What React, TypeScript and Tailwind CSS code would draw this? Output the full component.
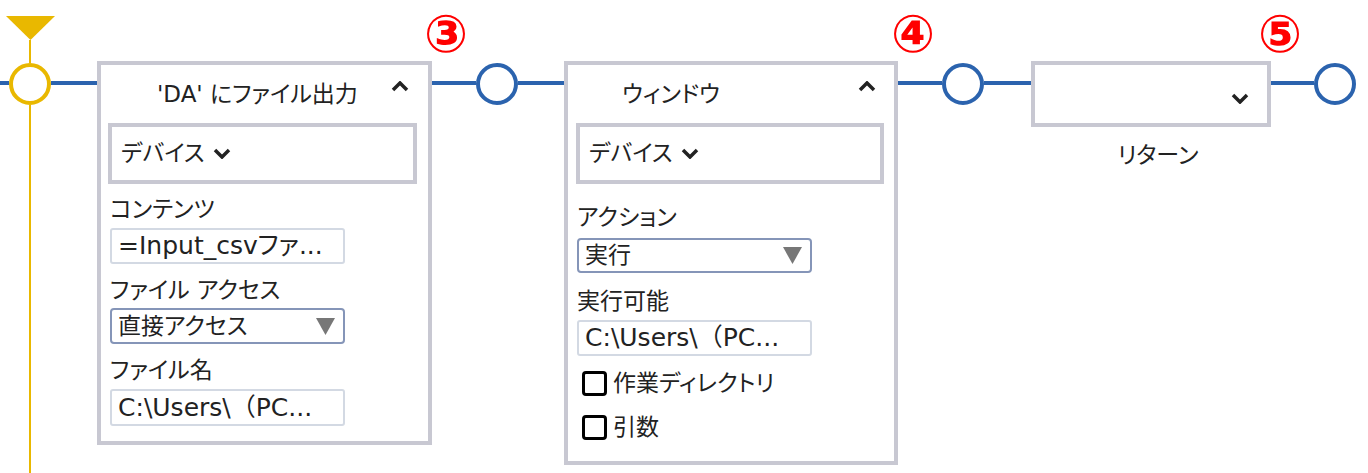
const BLUE = 'bg-[#2b63ae]'

function Seg({ w }: { w: string }) {
  return <div className={`${w} h-[4px] mt-[65px] shrink-0 ${BLUE}`} />
}

function Node() {
  return <div className="w-[42px] h-[42px] mt-[47px] shrink-0 rounded-full border-4 border-[#2b63ae] bg-white" />
}

function ChevronDown() {
  return (
    <svg width="18" height="11" viewBox="0 0 18 11" className="shrink-0">
      <polyline points="2,2 9,9 16,2" fill="none" stroke="#222" strokeWidth="3.5" />
    </svg>
  )
}

function ChevronUp() {
  return (
    <svg width="18" height="11" viewBox="0 0 18 11" className="shrink-0">
      <polyline points="2,9 9,2 16,9" fill="none" stroke="#222" strokeWidth="3.5" />
    </svg>
  )
}

function Header({ title, pl, pr }: { title: string; pl: string; pr: string }) {
  return (
    <div className={`flex h-[58px] ${pl} ${pr}`}>
      <div className="flex-1 pt-[14px] text-[23px] leading-[30px] whitespace-nowrap">{title}</div>
      <div className="mt-[16px]">
        <ChevronUp />
      </div>
    </div>
  )
}

function DeviceBox({ ml, w }: { ml: string; w: string }) {
  return (
    <div className={`${ml} ${w} h-[61px] border-4 border-[#c8c8d2] flex items-center gap-[8px] pl-[9px] text-[23px]`}>
      <span>デバイス</span>
      <ChevronDown />
    </div>
  )
}

function Path() {
  return (
    <>
      C:\Users\<span className="[font-feature-settings:normal]">（</span>PC...
    </>
  )
}

function TextField({ children, mt, h }: { children: React.ReactNode; mt: string; h: string }) {
  return (
    <div className={`${mt} ${h} w-[235px] border-2 border-[#d3d9e3] rounded-[3px] px-[6px] flex items-center text-[25px] whitespace-nowrap overflow-hidden`}>
      {children}
    </div>
  )
}

function SelectField({ value, mt, h }: { value: string; mt: string; h: string }) {
  return (
    <div className={`${mt} ${h} w-[235px] border-2 border-[#8595b8] rounded-[4px] pl-[6px] pr-[8px] flex items-center justify-between text-[23px]`}>
      <span>{value}</span>
      <svg width="19" height="17" viewBox="0 0 19 17">
        <polygon points="0,0 19,0 9.5,17" fill="#777" />
      </svg>
    </div>
  )
}

function Label({ text, mt }: { text: string; mt: string }) {
  return <div className={`${mt} h-[28px] text-[23px] leading-[28px] whitespace-nowrap`}>{text}</div>
}

function Check({ text, mt }: { text: string; mt: string }) {
  return (
    <div className={`${mt} h-[36px] flex items-center gap-[6px] pl-[5px] text-[23px]`}>
      <div className="w-[25px] h-[25px] border-[3px] border-black rounded-[4px]" />
      <span>{text}</span>
    </div>
  )
}

function Step({ n, left }: { n: string; left: string }) {
  return (
    <div className={`absolute ${left} top-[4px] w-[60px] h-[60px] flex items-center justify-center text-[52px] leading-none font-bold text-[#ff0000]`}>
      {n}
    </div>
  )
}

export default function App() {
  return (
    <div className="relative w-[1368px] h-[473px] overflow-hidden bg-white text-[#222] font-['DejaVu_Sans','Noto_Sans_CJK_JP',sans-serif] [font-feature-settings:'palt']">
      {/* flow row */}
      <div className="flex items-start h-full pt-[16px]">
        <Seg w="w-[9px]" />
        {/* start marker */}
        <div className="w-[42px] self-stretch shrink-0 flex flex-col items-center">
          <svg width="49" height="24" viewBox="0 0 49 24" className="shrink-0">
            <polygon points="0,0 49,0 24.5,24" fill="#e9b800" />
          </svg>
          <div className="w-[2px] h-[23px] bg-[#e9b800]" />
          <div className="w-[42px] h-[42px] shrink-0 rounded-full border-4 border-[#e9b800] bg-white" />
          <div className="w-[2px] flex-1 bg-[#e9b800]" />
        </div>
        <Seg w="w-[46px]" />

        {/* card 1 */}
        <div className="w-[335px] h-[384px] mt-[45px] shrink-0 border-4 border-[#c8c8d2] bg-white flex flex-col">
          <Header title="'DA' にファイル出力" pl="pl-[56px]" pr="pr-[19px]" />
          <DeviceBox ml="ml-[7px]" w="w-[309px]" />
          <div className="pl-[9px] flex flex-col">
            <Label text="コンテンツ" mt="mt-[11px]" />
            <TextField mt="mt-[5px]" h="h-[36px]">=Input_csvファ...</TextField>
            <Label text="ファイル アクセス" mt="mt-[12px]" />
            <SelectField value="直接アクセス" mt="mt-[4px]" h="h-[36px]" />
            <Label text="ファイル名" mt="mt-[12px]" />
            <TextField mt="mt-[5px]" h="h-[37px]"><Path /></TextField>
          </div>
        </div>

        <Seg w="w-[44px]" />
        <Node />
        <Seg w="w-[46px]" />

        {/* card 2 */}
        <div className="w-[334px] h-[404px] mt-[45px] shrink-0 border-4 border-[#c8c8d2] bg-white flex flex-col">
          <Header title="ウィンドウ" pl="pl-[54px]" pr="pr-[18px]" />
          <DeviceBox ml="ml-[8px]" w="w-[308px]" />
          <div className="pl-[9px] flex flex-col">
            <Label text="アクション" mt="mt-[19px]" />
            <SelectField value="実行" mt="mt-[7px]" h="h-[35px]" />
            <Label text="実行可能" mt="mt-[14px]" />
            <TextField mt="mt-[5px]" h="h-[36px]"><Path /></TextField>
            <Check text="作業ディレクトリ" mt="mt-[9px]" />
            <Check text="引数" mt="mt-[8px]" />
          </div>
        </div>

        <Seg w="w-[44px]" />
        <Node />
        <Seg w="w-[47px]" />

        {/* card 3 */}
        <div className="w-[240px] mt-[45px] shrink-0 flex flex-col">
          <div className="h-[66px] border-4 border-[#c8c8d2] bg-white flex justify-end pr-[18px] pt-[28px]">
            <ChevronDown />
          </div>
          <div className="mt-[13px] pl-[14px] text-center text-[23px] leading-[30px]">リターン</div>
        </div>

        <Seg w="w-[43px]" />
        <Node />
      </div>

      {/* step annotations */}
      <Step n="③" left="left-[416px]" />
      <Step n="④" left="left-[883px]" />
      <Step n="⑤" left="left-[1250px]" />
    </div>
  )
}
